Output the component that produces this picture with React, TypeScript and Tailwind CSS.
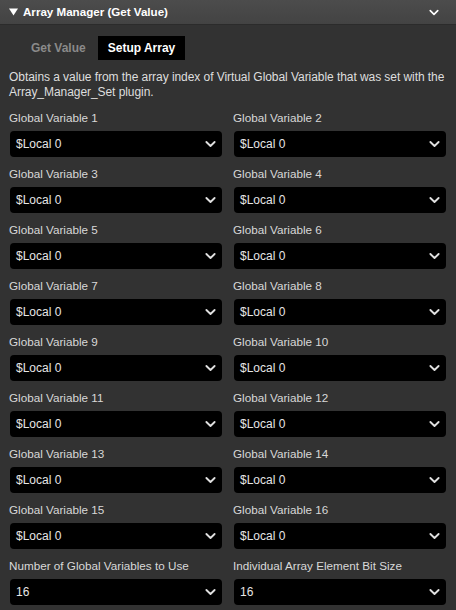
import React from "react";

const fields: { label: string; value: string }[] = [
  ...Array.from({ length: 16 }, (_, i) => ({ label: `Global Variable ${i + 1}`, value: "$Local 0" })),
  { label: "Number of Global Variables to Use", value: "16" },
  { label: "Individual Array Element Bit Size", value: "16" },
];

function Chevron({ className }: { className?: string }) {
  return (
    <svg viewBox="0 0 12 8" className={className} fill="none" stroke="currentColor" strokeWidth={2} strokeLinecap="round" strokeLinejoin="round">
      <path d="M1.5 1.8 6 6.2l4.5-4.4" />
    </svg>
  );
}

function SelectBox({ value }: { value: string }) {
  return (
    <div className="flex h-[26px] items-center justify-between rounded-[4px] bg-black pl-[6px] pr-[6px] text-[12px] text-[#e6e6e6]">
      <span>{value}</span>
      <Chevron className="h-[8px] w-[11px] text-[#e0e0e0]" />
    </div>
  );
}

export default function App() {
  return (
    <div
      className="h-[610px] w-[456px] overflow-hidden bg-[#323232] text-[#dcdcdc]"
      style={{ fontFamily: '"Liberation Sans", Arial, sans-serif' }}
    >
      {/* Panel header */}
      <div className="flex h-[25px] items-center justify-between border-b border-[#2b2b2b] bg-gradient-to-b from-[#4c4c4c] to-[#434343] pl-[9px] pr-[17px]">
        <div className="flex items-center gap-[5px]">
          <svg viewBox="0 0 10 8" className="h-[8px] w-[9px] text-white" fill="currentColor">
            <path d="M0 0h10L5 8z" />
          </svg>
          <span className="text-[11.6px] font-bold text-white">Array Manager (Get Value)</span>
        </div>
        <Chevron className="h-[7px] w-[10px] text-white" />
      </div>

      <div className="px-[9px]">
        {/* Tabs */}
        <div className="mt-[11px] flex h-[24px] items-center pl-[13px] text-[12px] font-bold">
          <div className="px-[9px] text-[#8a8a8a]">Get Value</div>
          <div className="ml-[3px] flex h-full items-center bg-black px-[10px] text-white">Setup Array</div>
        </div>

        <p className="-mr-[9px] mt-[10px] text-[12px] leading-[15px] tracking-[-0.06px] text-[#dedede]">
          <span className="whitespace-nowrap">Obtains a value from the array index of Virtual Global Variable that was set with the</span>
          <br />
          Array_Manager_Set plugin.
        </p>

        <div className="mt-[11px] grid grid-cols-2 gap-x-[12px] gap-y-[10px] pl-[1px] pr-[1px]">
          {fields.map((f) => (
            <div key={f.label}>
              <div className="mb-[6px] -ml-[1px] h-[14px] text-[11.7px] leading-[14px] text-[#d8d8d8]">{f.label}</div>
              <SelectBox value={f.value} />
            </div>
          ))}
        </div>
      </div>
    </div>
  );
}
